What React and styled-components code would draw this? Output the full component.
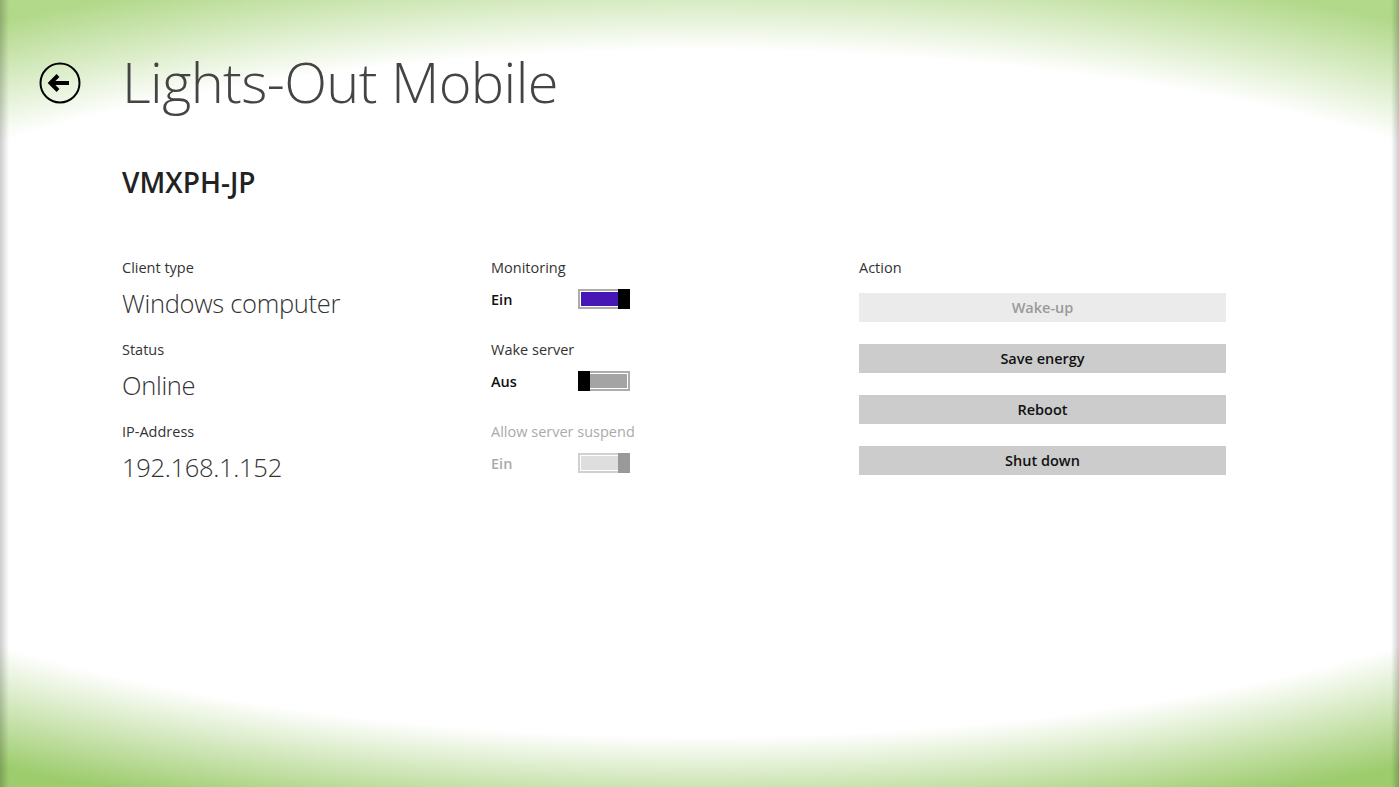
import React from "react";
import styled, { createGlobalStyle } from "styled-components";

const GlobalStyle = createGlobalStyle`
  html, body {
    margin: 0;
    height: 100%;
  }
  body {
    font-family: "Open Sans", "Noto Sans", "Liberation Sans", sans-serif;
    color: #222;
    background:
      linear-gradient(to right, rgba(0, 0, 0, 0.2), rgba(0, 0, 0, 0) 9px),
      linear-gradient(to left, rgba(0, 0, 0, 0.2), rgba(0, 0, 0, 0) 8px),
      radial-gradient(1320px 440px at 50% 50%, #fff 78%, rgba(255, 255, 255, 0) 100%),
      linear-gradient(#b2d98a, #a2cf73 50%, #9dcc6d);
    background-color: #fff;
  }
`;

const Page = styled.div`
  min-height: 787px;
  box-sizing: border-box;
`;

const Header = styled.header`
  display: flex;
  align-items: center;
  padding: 50px 0 0 39px;
  height: 66px;
`;

const BackButton = styled.button`
  width: 42px;
  height: 42px;
  padding: 0;
  border: none;
  background: transparent;
  display: flex;
  align-items: center;
  justify-content: center;
  cursor: pointer;
`;

const Title = styled.h1`
  margin: -4px 0 0 41px;
  font-size: 56px;
  line-height: 66px;
  font-weight: 300;
  color: #444;
  letter-spacing: -0.6px;
`;

const Content = styled.main`
  padding: 0 0 0 122px;
`;

const DeviceName = styled.h2`
  margin: 46px 0 0;
  font-size: 28px;
  line-height: 40px;
  font-weight: 600;
  color: #222;
`;

const Columns = styled.div`
  display: grid;
  grid-template-columns: 369px 368px 367px;
  margin-top: 55px;
`;

const Column = styled.section`
  display: flex;
  flex-direction: column;
`;

const Label = styled.div`
  font-size: 14.5px;
  line-height: 22px;
  color: ${(p) => (p.$disabled ? "#aaa" : "#333")};
`;

const Field = styled.div`
  height: 82px;
`;

const Value = styled.div`
  margin-top: 6px;
  font-size: 25.5px;
  line-height: 36px;
  font-weight: 300;
  color: #333;
  letter-spacing: -0.3px;
`;

const ToggleRow = styled.div`
  display: flex;
  align-items: center;
  margin-top: 9px;
  height: 22px;
`;

const State = styled.span`
  width: 87px;
  font-size: 14.5px;
  font-weight: 600;
  color: ${(p) => (p.$disabled ? "#aaa" : "#111")};
`;

const Track = styled.div`
  display: flex;
  width: 52px;
  height: 20px;
  box-sizing: border-box;
  flex-direction: ${(p) => (p.$on ? "row" : "row-reverse")};
`;

const Fill = styled.div`
  flex: 1;
  border: 2px solid ${(p) => p.$border};
  ${(p) => (p.$on ? "border-right: none;" : "border-left: none;")}
  padding: 1px;
  ${(p) => (p.$on ? "padding-right: 0;" : "padding-left: 0;")}
  background: #fff;
  display: flex;
  &::before {
    content: "";
    flex: 1;
    background: ${(p) => p.$color};
  }
`;

const Thumb = styled.div`
  width: 12px;
  background: ${(p) => p.$color};
`;

const Toggle = ({ on, disabled }) => {
  const fill = disabled ? "#dedede" : on ? "#4617b4" : "#a4a4a4";
  const border = disabled ? "#d0d0d0" : "#acacac";
  const thumb = disabled ? "#999" : "#000";
  return (
    <Track $on={on}>
      <Fill $on={on} $color={fill} $border={border} />
      <Thumb $color={thumb} />
    </Track>
  );
};

const ActionList = styled.div`
  display: flex;
  flex-direction: column;
  gap: 22px;
  margin-top: 14px;
`;

const ActionButton = styled.button`
  width: 367px;
  height: 29px;
  border: none;
  padding: 0;
  font-family: inherit;
  font-size: 14.5px;
  font-weight: 600;
  background: ${(p) => (p.disabled ? "#ebebeb" : "#cccccc")};
  color: ${(p) => (p.disabled ? "#9a9a9a" : "#111")};
  cursor: ${(p) => (p.disabled ? "default" : "pointer")};
`;

const BackIcon = () => (
  <svg width="42" height="42" viewBox="0 0 42 42">
    <circle cx="21" cy="21" r="19.5" fill="none" stroke="#000" strokeWidth="2" />
    <path d="M12 21h18" stroke="#000" strokeWidth="4" fill="none" />
    <path d="M19 13.5L11.5 21L19 28.5" stroke="#000" strokeWidth="4" fill="none" />
  </svg>
);

const info = [
  { label: "Client type", value: "Windows computer" },
  { label: "Status", value: "Online" },
  { label: "IP-Address", value: "192.168.1.152" },
];

const toggles = [
  { label: "Monitoring", state: "Ein", on: true },
  { label: "Wake server", state: "Aus", on: false },
  { label: "Allow server suspend", state: "Ein", on: true, disabled: true },
];

const actions = [
  { label: "Wake-up", disabled: true },
  { label: "Save energy" },
  { label: "Reboot" },
  { label: "Shut down" },
];

export default function App() {
  return (
    <Page>
      <GlobalStyle />
      <Header>
        <BackButton aria-label="Back">
          <BackIcon />
        </BackButton>
        <Title>Lights-Out Mobile</Title>
      </Header>
      <Content>
        <DeviceName>VMXPH-JP</DeviceName>
        <Columns>
          <Column>
            {info.map((f) => (
              <Field key={f.label}>
                <Label>{f.label}</Label>
                <Value>{f.value}</Value>
              </Field>
            ))}
          </Column>
          <Column>
            {toggles.map((t) => (
              <Field key={t.label}>
                <Label $disabled={t.disabled}>{t.label}</Label>
                <ToggleRow>
                  <State $disabled={t.disabled}>{t.state}</State>
                  <Toggle on={t.on} disabled={t.disabled} />
                </ToggleRow>
              </Field>
            ))}
          </Column>
          <Column>
            <Label>Action</Label>
            <ActionList>
              {actions.map((a) => (
                <ActionButton key={a.label} disabled={a.disabled}>
                  {a.label}
                </ActionButton>
              ))}
            </ActionList>
          </Column>
        </Columns>
      </Content>
    </Page>
  );
}
